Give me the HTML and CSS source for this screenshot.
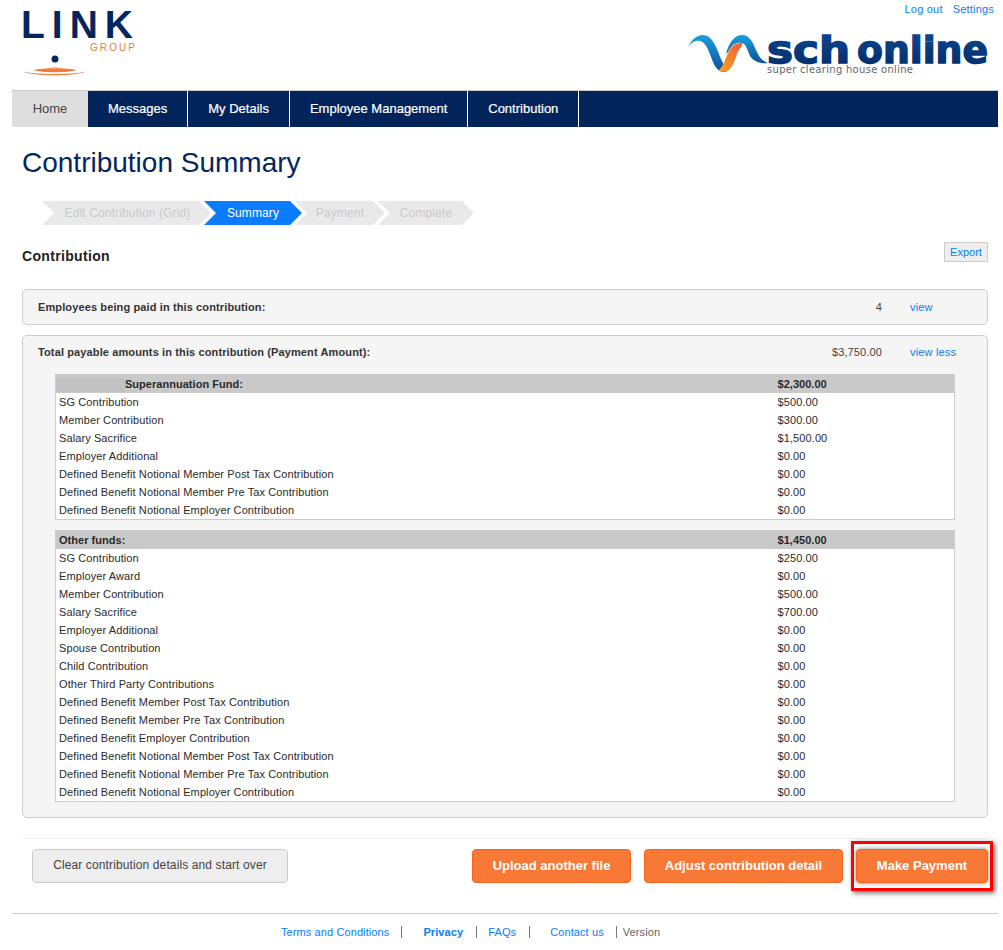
FILE: index.html
```html
<!DOCTYPE html>
<html lang="en">
<head>
<meta charset="utf-8">
<title>Contribution Summary</title>
<link rel="stylesheet" href="styles.css">
</head>
<body>
<div class="page">
  <header class="top">
    <svg class="link-logo" width="120" height="76" viewBox="0 -4 120 76">
      <text class="link-word" x="0" y="31" textLength="112" lengthAdjust="spacing">LINK</text>
      <text class="link-group" x="69" y="44" textLength="45" lengthAdjust="spacing">GROUP</text>
      <circle cx="34" cy="52" r="3.500" fill="#04265e"/>
      <path d="M2 64.500 C12 69.500 55 69.500 65 64.500 C55 67.800 12 67.800 2 64.500Z" fill="#f5793a"/>
      <path d="M12 63 C22 60.500 46 60.500 56 63 C46 66 22 66 12 63Z" fill="#f5793a"/>
      <ellipse cx="34" cy="60.500" rx="4" ry="0.700" fill="#f9c6a8"/>
    </svg>
    <div class="top-right">
      <nav class="util"><a href="#">Log out</a><a href="#">Settings</a></nav>
      <svg class="sch-logo" width="304" height="54" viewBox="0 -6 304 54">
        <defs>
          <linearGradient id="wave" x1="0" y1="0" x2="0" y2="1"><stop offset="0" stop-color="#1aa0dc"/><stop offset="1" stop-color="#0b4f9c"/></linearGradient>
          <linearGradient id="word" x1="0" y1="0" x2="0" y2="1"><stop offset="0" stop-color="#0d4a94"/><stop offset="1" stop-color="#022a66"/></linearGradient>
          <linearGradient id="orange" x1="0" y1="1" x2="1" y2="0"><stop offset="0" stop-color="#f9a02c"/><stop offset="1" stop-color="#ee5d2f"/></linearGradient>
        </defs>
        <path d="M1 17 C5 9 10 5 16 5 C24 5 28 14 32 24 C35 32 38 38 42 40 C36 44 31 41 28 36 C23 27 21 13 13 11 C8 10 4 13 1 17Z" fill="url(#wave)"/>
        <path d="M39 24 C42 12 48 5 55 5 C63 5 66 13 69 20 C72 27 75 31 81 33 C73 34 66 31 63 26 C60 20 60 14 54 13 C48 12 44 16 41 22Z" fill="url(#wave)"/>
        <path d="M32 40 C36 36 38 30 41 23 C44 16 48 13 54 13 C58 14 52 18 50 24 C48 30 46 36 42 40 C39 42 35 42 32 40Z" fill="url(#orange)"/>
        <text class="sch-word" x="80" y="33" textLength="83" lengthAdjust="spacingAndGlyphs" fill="url(#word)" stroke="url(#word)" stroke-width="1.500">sch</text>
        <text class="sch-word" x="170" y="33" textLength="131" lengthAdjust="spacingAndGlyphs" fill="url(#word)" stroke="url(#word)" stroke-width="1.500">online</text>
        <text class="sch-tag" x="80" y="43" textLength="146" lengthAdjust="spacing">super clearing house online</text>
      </svg>
    </div>
  </header>

  <nav class="mainnav">
    <a class="tab is-active" href="#">Home</a>
    <a class="tab" href="#">Messages</a>
    <a class="tab" href="#">My Details</a>
    <a class="tab" href="#">Employee Management</a>
    <a class="tab" href="#">Contribution</a>
  </nav>

  <main class="content">
    <h1 class="title">Contribution Summary</h1>

    <ol class="steps">
      <li class="step step-1">Edit Contribution (Grid)</li>
      <li class="step step-2 is-current">Summary</li>
      <li class="step step-3">Payment</li>
      <li class="step step-4">Complete</li>
    </ol>

    <div class="section-head">
      <h2 class="section-title">Contribution</h2>
      <a class="export" href="#">Export</a>
    </div>

    <section class="panel">
      <div class="panel-row">
        <span class="panel-label">Employees being paid in this contribution:</span>
        <span class="panel-value">4</span>
        <a class="panel-link" href="#">view</a>
      </div>
    </section>

    <section class="panel panel-open">
      <div class="panel-row">
        <span class="panel-label">Total payable amounts in this contribution (Payment Amount):</span>
        <span class="panel-value">$3,750.00</span>
        <a class="panel-link" href="#">view less</a>
      </div>

      <table class="breakdown">
        <thead><tr><th><span class="redacted"></span>Superannuation Fund:</th><th>$2,300.00</th></tr></thead>
        <tbody>
          <tr><td>SG Contribution</td><td>$500.00</td></tr>
          <tr><td>Member Contribution</td><td>$300.00</td></tr>
          <tr><td>Salary Sacrifice</td><td>$1,500.00</td></tr>
          <tr><td>Employer Additional</td><td>$0.00</td></tr>
          <tr><td>Defined Benefit Notional Member Post Tax Contribution</td><td>$0.00</td></tr>
          <tr><td>Defined Benefit Notional Member Pre Tax Contribution</td><td>$0.00</td></tr>
          <tr><td>Defined Benefit Notional Employer Contribution</td><td>$0.00</td></tr>
        </tbody>
      </table>

      <table class="breakdown">
        <thead><tr><th>Other funds:</th><th>$1,450.00</th></tr></thead>
        <tbody>
          <tr><td>SG Contribution</td><td>$250.00</td></tr>
          <tr><td>Employer Award</td><td>$0.00</td></tr>
          <tr><td>Member Contribution</td><td>$500.00</td></tr>
          <tr><td>Salary Sacrifice</td><td>$700.00</td></tr>
          <tr><td>Employer Additional</td><td>$0.00</td></tr>
          <tr><td>Spouse Contribution</td><td>$0.00</td></tr>
          <tr><td>Child Contribution</td><td>$0.00</td></tr>
          <tr><td>Other Third Party Contributions</td><td>$0.00</td></tr>
          <tr><td>Defined Benefit Member Post Tax Contribution</td><td>$0.00</td></tr>
          <tr><td>Defined Benefit Member Pre Tax Contribution</td><td>$0.00</td></tr>
          <tr><td>Defined Benefit Employer Contribution</td><td>$0.00</td></tr>
          <tr><td>Defined Benefit Notional Member Post Tax Contribution</td><td>$0.00</td></tr>
          <tr><td>Defined Benefit Notional Member Pre Tax Contribution</td><td>$0.00</td></tr>
          <tr><td>Defined Benefit Notional Employer Contribution</td><td>$0.00</td></tr>
        </tbody>
      </table>
    </section>

    <div class="actions">
      <button class="btn btn-clear" type="button">Clear contribution details and start over</button>
      <div class="actions-right">
        <button class="btn btn-primary btn-upload" type="button">Upload another file</button>
        <button class="btn btn-primary btn-adjust" type="button">Adjust contribution detail</button>
        <button class="btn btn-primary btn-pay" type="button">Make Payment</button>
      </div>
    </div>
  </main>

  <footer class="foot">
    <a class="foot-link f1" href="#">Terms and Conditions</a>
    <a class="foot-link f2" href="#">Privacy</a>
    <a class="foot-link f3" href="#">FAQs</a>
    <a class="foot-link f4" href="#">Contact us</a>
    <span class="f5">Version</span>
  </footer>
</div>
</body>
</html>
```
FILE: styles.css
```css
* { box-sizing: border-box; }
html, body { margin: 0; padding: 0; background: #fff; }
body { font-family: "Liberation Sans", Arial, sans-serif; font-size: 11px; color: #333; }
a { color: #0a7cff; text-decoration: none; }
.page { width: 986px; margin-left: 12px; height: 950px; overflow: hidden; }

.top { height: 91px; display: flex; justify-content: space-between; border-bottom: 1px solid #ccc; }
.link-logo { margin: 3px 0 0 9px; display: block; }
.link-word { font: 700 39px "Liberation Sans", sans-serif; fill: #04265e; }
.link-group { font: 400 10px "Liberation Sans", sans-serif; fill: #f5793a; }
.top-right { display: flex; flex-direction: column; align-items: flex-end; }
.util { display: flex; gap: 10px; margin: 3px 4px 0 0; font-size: 11px; line-height: 13px; letter-spacing: .2px; }
.sch-logo { display: block; margin: 8px 7px 0 0; }
.sch-word { font: 700 38px "DejaVu Sans", sans-serif; }
.sch-tag { font: 400 10px "DejaVu Sans", sans-serif; fill: #666; }

.mainnav { display: flex; height: 36px; background: #02245b; }
.tab { display: flex; align-items: center; justify-content: center; padding: 0 20px 2px; height: 36px; color: #fff; font-size: 13px; border-right: 1px solid #fff; -webkit-text-stroke: .2px #fff; }
.tab.is-active { width: 76px; padding: 0 0 2px; background: #dedede; color: #444; border-right: 0; -webkit-text-stroke: 0; }

.content { padding: 0 10px; }
.title { margin: 20px 0 0; font-size: 28px; line-height: 32px; font-weight: 400; color: #04265e; }

.steps { list-style: none; display: flex; margin: 22px 0 0; padding: 0 0 0 20px; height: 24px; }
.step { height: 24px; line-height: 24px; text-align: center; font-size: 12px; letter-spacing: .13px; color: #c9c9c9; background: #e9e9e9; clip-path: polygon(0 0, calc(100% - 12px) 0, 100% 50%, calc(100% - 12px) 100%, 0 100%, 12px 50%); margin-right: -7px; }
.step-1 { width: 169px; padding-left: 2px; }
.step-2 { width: 98px; }
.step-3 { width: 90px; }
.step-4 { width: 96px; }
.step.is-current { background: #0a7cff; color: #fff; }

.section-head { display: flex; justify-content: space-between; align-items: flex-start; margin-top: 17px; height: 47px; }
.section-title { margin: 6px 0 0; font-size: 14px; line-height: 16px; font-weight: 700; letter-spacing: .33px; color: #222; }
.export { width: 44px; height: 20px; line-height: 18px; text-align: center; background: #eee; border: 1px solid #ccc; font-size: 11px; }

.panel { background: #f5f5f5; border: 1px solid #ccc; border-radius: 5px; height: 36px; margin-bottom: 10px; }
.panel-open { height: 483px; margin-bottom: 20px; }
.panel-row { display: flex; align-items: center; height: 34px; padding-left: 15px; letter-spacing: .12px; }
.panel-open .panel-row { height: 33px; padding-bottom: 2px; }
.panel-label { flex: 0 0 auto; font-weight: 700; color: #333; }
.panel-value { margin-left: auto; width: 143px; text-align: right; color: #444; }
.panel:not(.panel-open) .panel-value { width: 80px; }
.panel-link { flex: 0 0 auto; width: 77px; margin-left: 28px; letter-spacing: .17px; }

.breakdown { width: 900px; margin: 5px 0 10px 32px; border-collapse: collapse; table-layout: fixed; background: #fff; border: 1px solid #ccc; border-top: 0; letter-spacing: .1px; }
.breakdown th, .breakdown td { height: 18px; padding: 0 0 0 3px; text-align: left; line-height: 18px; color: #2a2a2a; }
.breakdown td + td { padding-left: 4px; }
.breakdown th + th { padding-left: 4px; }
.breakdown th { height: 19px; background: #c9c9c9; font-weight: 700; letter-spacing: .03px; }
.breakdown th:first-child { width: 718px; }
.redacted { display: inline-block; width: 69px; height: 14px; margin-left: -3px; background: #c2c2c2; vertical-align: middle; }

.actions { display: flex; justify-content: space-between; align-items: flex-start; border-top: 1px solid #eee; padding: 10px 0 0 10px; height: 75px; }
.actions-right { display: flex; gap: 13px; }
.btn { height: 34px; border-radius: 4px; font-family: inherit; padding: 0 0 2px; cursor: pointer; }
.btn-clear { width: 256px; background: #eee; border: 1px solid #ccc; color: #444; font-size: 12px; letter-spacing: .12px; }
.btn-primary { background: #f77935; border: 1px solid #f9621a; color: #fff; font-size: 13px; font-weight: 700; }
.btn-upload { width: 159px; }
.btn-adjust { width: 199px; }
.btn-pay { position: relative; width: 132px; box-shadow: 0 0 5px rgba(0,0,0,.45); }
.btn-pay::after { content: ""; position: absolute; left: -6px; right: -6px; top: -9px; bottom: -9px; border: 3px solid #f00; box-shadow: 2px 2px 5px rgba(0,0,0,.6); pointer-events: none; }

.foot { border-top: 1px solid #ccc; height: 37px; font-size: 11px; letter-spacing: .1px; display: flex; align-items: center; padding-left: 269px; }
.foot-link { line-height: 12px; border-right: 1px solid #777; }
.f1 { padding-right: 12px; margin-right: 21px; }
.f2 { padding-right: 13px; margin-right: 11px; font-weight: 700; }
.f3 { padding-right: 13px; margin-right: 20px; }
.f4 { padding-right: 12px; border-right: 0; }
.f5 { line-height: 12px; border-left: 1px solid #777; padding-left: 6px; color: #666; }
```
